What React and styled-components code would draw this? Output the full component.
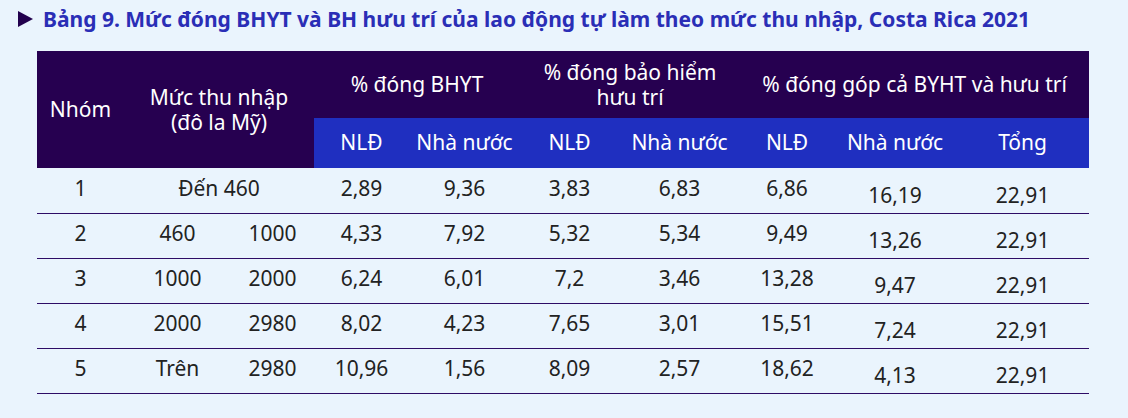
import React from 'react';
import styled, { createGlobalStyle } from 'styled-components';

const GlobalStyle = createGlobalStyle`
  body {
    margin: 0;
    background: #eaf4fd;
    font-family: 'Noto Sans', 'Open Sans', sans-serif;
  }
`;

const Page = styled.div`
  width: 1128px;
  height: 418px;
  box-sizing: border-box;
  padding: 5px 0 0 18px;
  background: #eaf4fd;
`;

const Title = styled.h2`
  display: flex;
  align-items: center;
  gap: 10px;
  margin: 0 0 18px 0;
  font-size: 21px;
  font-weight: 700;
  color: #2a2eb6;
  line-height: 28px;
`;

const Arrow = styled.span`
  width: 0;
  height: 0;
  border-top: 8px solid transparent;
  border-bottom: 8px solid transparent;
  border-left: 15px solid #22004d;
`;

const Table = styled.table`
  margin-left: 19px;
  width: 1052px;
  border-collapse: collapse;
  table-layout: fixed;
  font-size: 21px;
`;

const HeadCell = styled.th`
  background: #260050;
  color: #fff;
  font-weight: 400;
  line-height: 25px;
  height: 67px;
  padding: 0;
  text-align: center;
  vertical-align: middle;
`;

const SubCell = styled.th`
  background: #1f2fc0;
  color: #fff;
  font-weight: 400;
  height: 48px;
  padding: 0 0 2px 0;
  text-align: center;
`;

const Row = styled.tr`
  border-bottom: 1px solid #2e0c66;
`;

const Cell = styled.td`
  height: 45px;
  padding: ${p => (p.low ? '10px 0 0 0' : '0 0 4px 0')};
  text-align: center;
  color: #222;
  box-sizing: border-box;
  line-height: 25px;
`;

const widths = [87, 107, 83, 95, 111, 99, 121, 94, 122, 133];

const rows = [
  ['1', 'Đến 460', null, '2,89', '9,36', '3,83', '6,83', '6,86', '16,19', '22,91'],
  ['2', '460', '1000', '4,33', '7,92', '5,32', '5,34', '9,49', '13,26', '22,91'],
  ['3', '1000', '2000', '6,24', '6,01', '7,2', '3,46', '13,28', '9,47', '22,91'],
  ['4', '2000', '2980', '8,02', '4,23', '7,65', '3,01', '15,51', '7,24', '22,91'],
  ['5', 'Trên', '2980', '10,96', '1,56', '8,09', '2,57', '18,62', '4,13', '22,91'],
];

const App = () => (
  <Page>
    <GlobalStyle />
    <Title>
      <Arrow />
      Bảng 9. Mức đóng BHYT và BH hưu trí của lao động tự làm theo mức thu nhập, Costa Rica 2021
    </Title>
    <Table>
      <colgroup>
        {widths.map((w, i) => (
          <col key={i} style={{ width: w }} />
        ))}
      </colgroup>
      <thead>
        <tr>
          <HeadCell rowSpan={2}>Nhóm</HeadCell>
          <HeadCell rowSpan={2} colSpan={2}>
            Mức thu nhập
            <br />
            (đô la Mỹ)
          </HeadCell>
          <HeadCell colSpan={2}>% đóng BHYT</HeadCell>
          <HeadCell colSpan={2}>
            % đóng bảo hiểm
            <br />
            hưu trí
          </HeadCell>
          <HeadCell colSpan={3}>% đóng góp cả BYHT và hưu trí</HeadCell>
        </tr>
        <tr>
          <SubCell>NLĐ</SubCell>
          <SubCell>Nhà nước</SubCell>
          <SubCell>NLĐ</SubCell>
          <SubCell>Nhà nước</SubCell>
          <SubCell>NLĐ</SubCell>
          <SubCell>Nhà nước</SubCell>
          <SubCell>Tổng</SubCell>
        </tr>
      </thead>
      <tbody>
        {rows.map(r => (
          <Row key={r[0]}>
            <Cell>{r[0]}</Cell>
            {r[2] === null ? (
              <Cell colSpan={2}>{r[1]}</Cell>
            ) : (
              <>
                <Cell>{r[1]}</Cell>
                <Cell>{r[2]}</Cell>
              </>
            )}
            {r.slice(3).map((v, i) => (
              <Cell key={i} low={i >= 5}>
                {v}
              </Cell>
            ))}
          </Row>
        ))}
      </tbody>
    </Table>
  </Page>
);

export default App;
